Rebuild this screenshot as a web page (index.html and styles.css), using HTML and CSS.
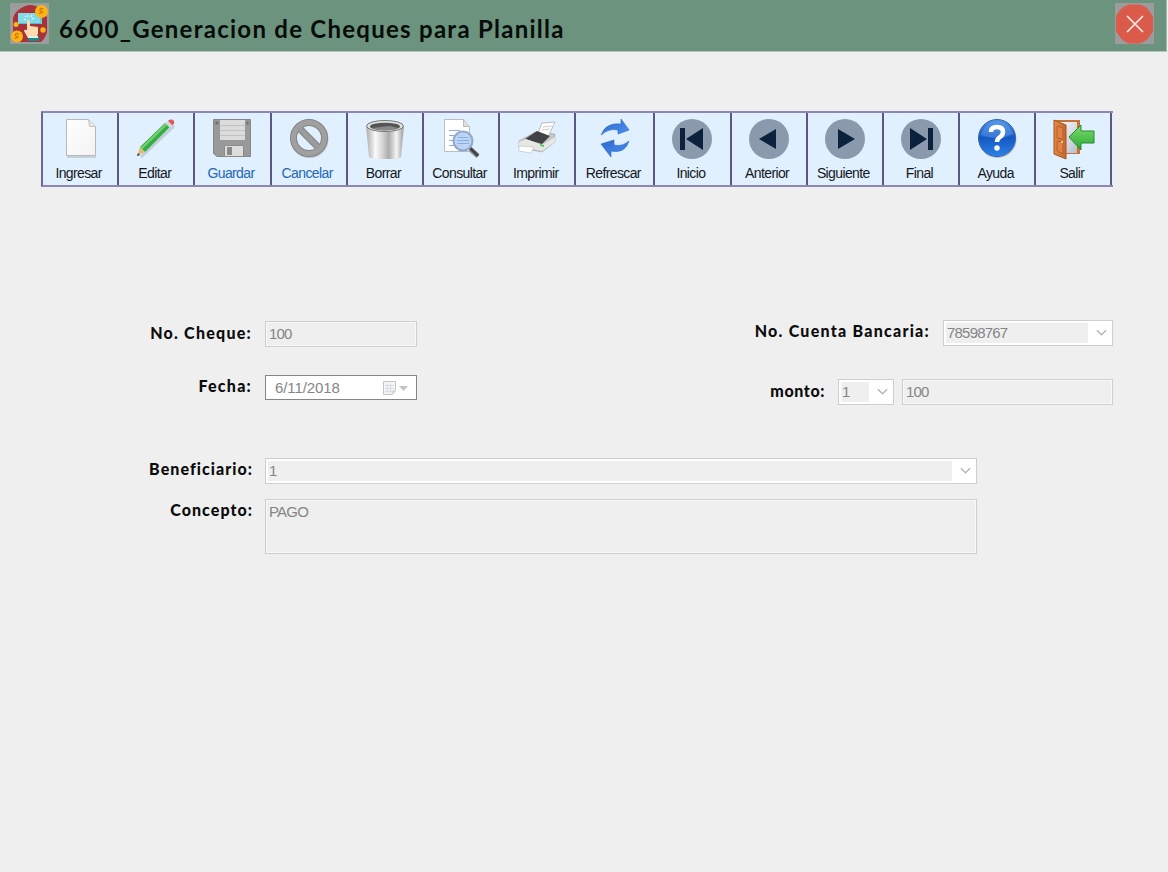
FILE: index.html
```html
<!DOCTYPE html>
<html lang="es">
<head>
<meta charset="utf-8">
<title>6600_Generacion de Cheques para Planilla</title>
<link rel="stylesheet" href="styles.css">
</head>
<body>
<header class="titlebar">
  <svg class="logo" width="39" height="41" viewBox="0 0 39 41">
    <rect width="39" height="41" fill="#9d9c9d"/>
    <path d="M13 4Q20 0 28 4L37 14V29Q35 36 31 39H8Q3 33 3 25V15Q5 8 13 4Z" fill="#a93238"/>
    <rect x="8" y="10" width="24" height="11" fill="#83d9e5"/>
    <path d="M9 20.500h22V11" fill="none" stroke="#55bdd0"/>
    <path d="M14 16l2 1M22 16l2-1M18 12v2M15 13l1 1M22 12l-1 2" stroke="#e3fbff" stroke-width="1.200"/>
    <path d="M17 18q1.500-2 3 0v5l8 1v7l-2 4h-8l-4-7q0-2 3-1Z" fill="#fbdcae"/>
    <path d="M18 33h11v5H18Z" fill="#11908b"/><path d="M18 33h10v2H18Z" fill="#e8eee2"/>
    <g fill="#fbb514"><circle cx="31.500" cy="8.500" r="6.500"/><circle cx="7" cy="33.500" r="6"/><circle cx="6" cy="21.500" r="2.500"/><circle cx="33" cy="27" r="2.700"/></g>
    <path d="M33.500 6.500q-3-2-3.500 0t2 2.200-3 2M9 31.500q-3-2-3.500 0t2 2.200-3 2" fill="none" stroke="#d87913" stroke-width="1.300"/>
  </svg>
  <h1 class="title">6600_Generacion de Cheques para Planilla</h1>
  <button class="close" aria-label="Cerrar">
    <svg width="39" height="41" viewBox="0 0 39 41"><rect width="39" height="41" fill="#9d9c9d"/><path d="M14 1.500h11q5 1 9 6l4 6v15l-5 7q-4 4-9 5H15q-5-1-9-5l-5-7V13l4-6q4-4 9-5.500Z" fill="#db5b4b"/><path d="M12.500 13.500l15 15M27.500 13.500l-15 15" stroke="#fbe9e6" stroke-width="1.700" stroke-linecap="round"/></svg>
  </button>
</header>

<nav class="toolbar">
  <button class="tool"><svg class="icon" viewBox="0 0 40 42">
    <defs><linearGradient id="paper" x2="1" y2="1"><stop stop-color="#fff"/><stop offset="1" stop-color="#f3f3f3"/></linearGradient>
    <linearGradient id="metal"><stop stop-color="#aaa"/><stop offset=".25" stop-color="#fafafa"/><stop offset=".45" stop-color="#d0d0d0"/><stop offset=".6" stop-color="#ababab"/><stop offset=".8" stop-color="#f4f4f4"/><stop offset="1" stop-color="#999"/></linearGradient>
    <linearGradient id="blue" x2="0" y2="1"><stop stop-color="#4d91e5"/><stop offset=".5" stop-color="#1558c2"/><stop offset="1" stop-color="#2c83e8"/></linearGradient>
    <linearGradient id="arrow" x2="1" y2="1"><stop stop-color="#2e65cf"/><stop offset="1" stop-color="#4b95ef"/></linearGradient>
    <linearGradient id="wood"><stop stop-color="#e48a45"/><stop offset="1" stop-color="#c7672e"/></linearGradient>
    <linearGradient id="leaf" x2="1" y2="1"><stop stop-color="#fff"/><stop offset="1" stop-color="#b8bfca"/></linearGradient>
    <linearGradient id="green" x2="0" y2="1"><stop stop-color="#81dc6d"/><stop offset="1" stop-color="#26a834"/></linearGradient></defs>
    <path d="M8 3h20l8 8v29H7Z" fill="#b5bdc4" opacity=".6"/><path d="M6.500 1.500h22l7 7v29h-29Z" fill="url(#paper)" stroke="#b8b8b8"/><path d="M28.500 1.500l1 7h6" fill="#e8e8e8" stroke="#c4c4c4"/></svg><span class="caption">Ingresar</span></button>
  <button class="tool"><svg class="icon" viewBox="0 0 40 42">
    <path d="M5 39L38 8" stroke="#a2aeba" stroke-width="3" opacity=".5"/><path d="M1 38l3-9 5 5Z" fill="#e6bd78"/><path d="M1 38l1-3 2 2Z" fill="#333"/><path d="M4 29L29 5l5 4L9 34Z" fill="#37ad42"/><path d="M5.500 30.500L30 6.500" stroke="#76d477" stroke-width="2"/><path d="M29 5l4-3 4 5-3 3Z" fill="#d8d8dc"/><path d="M32 3q1-2 4-1.500 3 1 2 4l-1.500 2Z" fill="#dc5a5b"/></svg><span class="caption">Editar</span></button>
  <button class="tool off"><svg class="icon" viewBox="0 0 40 42">
    <path d="M1.500 1.500h37v37H5l-3.500-3Z" fill="#999" stroke="#858585"/><path d="M8 2h25v20H8Z" fill="#dcdcdc"/><path d="M8 7.500h25M8 12.500h25M8 17.500h25" stroke="#c2c2c2"/><path d="M3.500 3.500h3v3h-3ZM34.500 3.500h2v3h-2Z" fill="#717171"/><path d="M12.500 27.500h19v11h-19Z" fill="#ddd" stroke="#8b8b8b"/><path d="M15 29h5v8h-5Z" fill="#898989"/></svg><span class="caption">Guardar</span></button>
  <button class="tool off"><svg class="icon" viewBox="0 0 40 42">
    <circle cx="20.500" cy="21" r="16.500" fill="none" stroke="#bdc3ca" stroke-width="5"/><circle cx="20" cy="20" r="15.500" fill="none" stroke="#838383" stroke-width="7"/><path d="M9 9l22 22" stroke="#838383" stroke-width="7"/><circle cx="20" cy="20" r="15.500" fill="none" stroke="#a0a0a0" stroke-width="5"/><path d="M9.500 9.500l21 21" stroke="#9c9c9c" stroke-width="5"/></svg><span class="caption">Cancelar</span></button>
  <button class="tool"><svg class="icon" viewBox="0 0 40 42">
    <path d="M1 8l3 31q1 2 16 2t16-2l3-31Z" fill="url(#metal)"/><ellipse cx="20" cy="8" rx="18.500" ry="5.500" fill="#e1e1e1" stroke="#777"/><ellipse cx="20" cy="8.500" rx="15" ry="3.800" fill="#555"/><path d="M7 10q12 5 26 0l-8-2-9 1Z" fill="#898989"/></svg><span class="caption">Borrar</span></button>
  <button class="tool"><svg class="icon" viewBox="0 0 40 42">
    <path d="M3.500 1.500h19l6 7v25h-25Z" fill="#fff" stroke="#b9bec4"/><path d="M22.500 2v6.500h6" fill="#ddd" stroke="#bbb"/><path d="M8 12.500h11M8 17.500h16M8 22.500h14M8 27.500h14" stroke="#90add8"/><path d="M29 31l8 7" stroke="#999" stroke-width="5"/><path d="M29 30l8 8" stroke="#3e4144" stroke-width="3"/><circle cx="22" cy="23" r="9.500" fill="#b7d2f2" fill-opacity=".9" stroke="#8fa8cb" stroke-width="2"/><path d="M17 19.500h10M16 22.500h12M16 25.500h12" stroke="#8bafe4"/></svg><span class="caption">Consultar</span></button>
  <button class="tool"><svg class="icon" viewBox="0 0 40 42">
    <path d="M2 23l16-9 20 2v8L25 34 9 31l-7-1Z" fill="#c5c6c4" stroke="#a7a8a6" stroke-width=".6"/><path d="M21 15l4-10 13-1-7 15Z" fill="#fff" stroke="#bbb"/><path d="M26 9l9-1M25 12l8-1" stroke="#ccc"/><path d="M8 21l12-8 13 5-8 8Z" fill="#414245"/><path d="M2 24l7-3 16 6 13-8v5L25 33 2 28Z" fill="#e7e7e4"/><path d="M2 28l15 1-3 6-12-2Z" fill="#fff" stroke="#bbb" stroke-width=".6"/><path d="M23 26l4 1v2l-4-1Z" fill="#61c766"/></svg><span class="caption">Imprimir</span></button>
  <button class="tool wide"><svg class="icon" viewBox="0 0 40 42">
    <path d="M6 17Q11 4 26 6V1l8 11-11 4v-4Q14 10 6 17Z" fill="url(#arrow)" stroke="#2962bf" stroke-width=".6"/><path d="M34 23Q30 36 16 33v6L6 26l13-4v5q8 2 15-4Z" fill="url(#arrow)" stroke="#2962bf" stroke-width=".6"/></svg><span class="caption">Refrescar</span></button>
  <button class="tool"><svg class="icon" viewBox="0 0 40 42"><circle cx="20" cy="21" r="20" fill="#8a9aac"/><path d="M8 10h5v22H8ZM31 10v22L14 21Z" fill="#0c213b"/></svg><span class="caption">Inicio</span></button>
  <button class="tool"><svg class="icon" viewBox="0 0 40 42"><circle cx="20" cy="21" r="20" fill="#8a9aac"/><path d="M27 11v20L10 21Z" fill="#0c213b"/></svg><span class="caption">Anterior</span></button>
  <button class="tool"><svg class="icon" viewBox="0 0 40 42"><circle cx="20" cy="21" r="20" fill="#8a9aac"/><path d="M13 11v20l17-10Z" fill="#0c213b"/></svg><span class="caption">Siguiente</span></button>
  <button class="tool"><svg class="icon" viewBox="0 0 40 42"><circle cx="20" cy="21" r="20" fill="#8a9aac"/><path d="M9 10v22l17-11ZM27 10h5v22h-5Z" fill="#0c213b"/></svg><span class="caption">Final</span></button>
  <button class="tool"><svg class="icon" viewBox="0 0 40 42"><circle cx="20.500" cy="21" r="19" fill="#b4bec9"/><circle cx="20" cy="20" r="18.500" fill="url(#blue)" stroke="#3264b5"/><path d="M4 17q16 7 32-1Q31 3 20 3T4 17Z" fill="#6fa7ef" opacity=".4"/><path d="M14 14q0-5 6-5t6 5q0 3-3 5t-3 5" fill="none" stroke="#fff" stroke-width="4.500"/><circle cx="20" cy="30" r="2.700" fill="#fff"/></svg><span class="caption">Ayuda</span></button>
  <button class="tool"><svg class="icon" viewBox="0 0 40 42"><path d="M1 2h26v34H1Z" fill="#c67137"/><path d="M4 4h20v31H4Z" fill="url(#leaf)"/><path d="M1 2l12 5v34L1 36Z" fill="url(#wood)" stroke="#a65323"/><path d="M4 8l6 2v11l-6-1ZM4 23l6 1v12l-6-3Z" fill="#dd8144" stroke="#b95e2c"/><circle cx="9" cy="24" r="1" fill="#ffe28c"/><path d="M16 19L28 7v6h13v12H28v7Z" fill="url(#green)" stroke="#268932"/></svg><span class="caption">Salir</span></button>
</nav>

<main class="form">
  <div class="upper">
    <div class="col-left">
      <div class="row"><label class="label">No. Cheque:</label><div class="field short">100</div></div>
      <div class="row date-row"><label class="label">Fecha:</label><div class="date"><span>6/11/2018</span>
        <svg width="26" height="16" viewBox="0 0 26 16"><path d="M1.500 1.500h12v9l-3 4h-9Z" fill="#f5f5f5" stroke="#c6c6c6"/><path d="M3 5.500h9M3 8.500h9M3 11.500h7M5.500 4v9M8.500 4v9" stroke="#d8dce5"/><path d="M10.500 14.500v-4h3Z" fill="#ccc"/><path d="M17 6h9l-4.500 5Z" fill="#c4c4c4"/></svg></div></div>
    </div>
    <div class="col-right">
      <div class="row"><label class="label">No. Cuenta Bancaria:</label><div class="combo account"><span class="value">78598767</span><svg class="chevron" viewBox="0 0 12 8"><path d="M1 1l5 5 5-5"/></svg></div></div>
      <div class="row amount-row"><label class="label">monto:</label><div class="combo currency"><span class="value">1</span><svg class="chevron" viewBox="0 0 12 8"><path d="M1 1l5 5 5-5"/></svg></div><div class="field amount">100</div></div>
    </div>
  </div>
  <div class="row payee-row"><label class="label">Beneficiario:</label><div class="combo payee"><span class="value">1</span><svg class="chevron" viewBox="0 0 12 8"><path d="M1 1l5 5 5-5"/></svg></div></div>
  <div class="row concept-row"><label class="label">Concepto:</label><div class="field concept">PAGO</div></div>
</main>
</body>
</html>
```
FILE: styles.css
```css
* { box-sizing: border-box; }
body { margin: 0; width: 1168px; height: 872px; background: #efefef; overflow: hidden; font-family: "Liberation Sans", Arial, sans-serif; }
button { margin: 0; padding: 0; border: 0; background: none; font: inherit; }
svg { display: block; flex: none; }
.titlebar { width: 1167px; height: 52px; padding: 3px 12px 0 10px; display: flex; background: #6c937e; border-bottom: 1px solid #b1c6ba; border-right: 1px solid #a4bbae; }
.title { margin: 11px auto 0 10px; font: 700 24px/30px Lato, sans-serif; letter-spacing: 1.260px; white-space: nowrap; color: #070b09; }
.close { width: 39px; height: 41px; }

.toolbar { display: flex; width: 1072px; height: 76px; margin: 59px 0 0 41px; background: #e0f0ff; border: 2px solid #8d88b3; border-left-color: #6b6899; border-right: 0; }
.tool { display: flex; flex: 0 0 76.2px; flex-direction: column; align-items: center; padding: 5px 3px 0 0; border-right: 2px solid #5d5787; color: #15181c; }
.tool.wide { flex-basis: 79px; }
.icon { width: 40px; height: 42px; overflow: visible; margin-left: 3px; }
.caption { margin-top: 5px; font-size: 14px; line-height: 17px; letter-spacing: -.62px; white-space: nowrap; }
.off { color: #2467b5; }

.form { padding-top: 133px; }
.upper { display: flex; justify-content: space-between; width: 1113px; height: 138px; }
.row { display: flex; align-items: flex-start; }
.label { flex: 1; text-align: right; padding-right: 13px; font: 900 16px/24px Lato, sans-serif; letter-spacing: 1.250px; color: #0b0b0b; white-space: nowrap; }
.col-left { width: 416.500px; padding-top: 1px; }
.col-right { width: 400px; }
.field, .combo, .date { font-size: 15px; letter-spacing: -.8px; color: #858585; white-space: nowrap; }
.field { border: 1px solid #cecece; box-shadow: inset 0 0 0 1px #f8f8f8; height: 26px; padding: 0 3px; line-height: 24px; }
.short { width: 151.500px; }
.date-row { margin-top: 28px; }
.date-row .label { line-height: 22px; }
.date { display: flex; align-items: center; justify-content: space-between; width: 151.500px; height: 25px; padding: 0 8px 0 9px; background: #fff; border: 1px solid #858585; }
.date span { letter-spacing: -.1px; }
.combo { display: flex; align-items: center; justify-content: space-between; height: 26px; border: 1px solid #cecece; padding: 2px 5px 2px 2px; background: #fff; }
.value { flex: 1; align-self: stretch; background: #efefef; padding-left: 1px; line-height: 19px; }
.chevron { width: 11px; height: 8px; margin-left: 8px; fill: none; stroke: #b5b5b5; stroke-width: 1.500; }
.account { width: 170px; }
.col-right .label { line-height: 22px; }
.amount-row { margin-top: 33px; }
.amount-row .label { line-height: 24px; letter-spacing: .6px; }
.currency { width: 56px; margin-right: 8px; }
.amount { width: 211px; }
.payee-row, .concept-row { width: 977px; }
.payee-row .label, .concept-row .label { flex: 0 0 265px; padding-right: 12px; line-height: 22px; letter-spacing: 1.050px; }
.payee { width: 711.500px; }
.concept-row { margin-top: 15px; }
.concept { width: 711.500px; height: 55px; }
```
